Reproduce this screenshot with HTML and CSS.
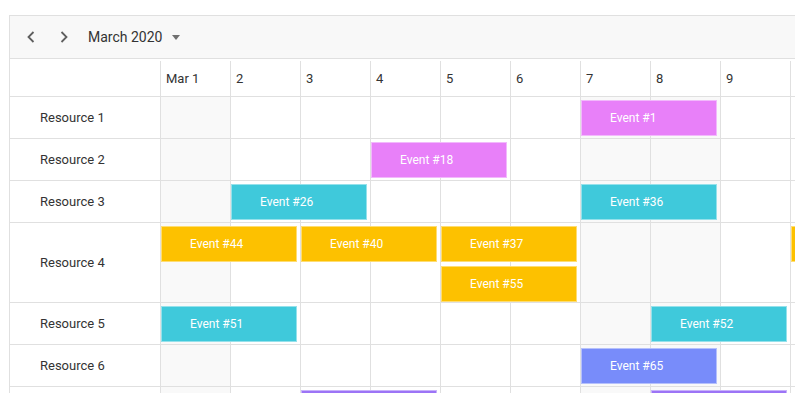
FILE: index.html
```html
<!DOCTYPE html>
<html>
  <head>
    <meta charset="UTF-8" />
    <title>Resource Timeline</title>
    <link rel="stylesheet" href="styles.css">
  </head>

  <body>
    <div class="scheduler">
      <div class="toolbar">
        <button class="nav-btn" aria-label="Previous">
          <svg width="10" height="12" viewBox="0 0 10 12"><polyline points="7.5,1 2.5,6 7.5,11" /></svg>
        </button>
        <button class="nav-btn" aria-label="Next">
          <svg width="10" height="12" viewBox="0 0 10 12"><polyline points="2.5,1 7.5,6 2.5,11" /></svg>
        </button>
        <div class="period">March 2020</div>
        <span class="caret"></span>
      </div>

      <div class="row head">
        <div class="res-cell"></div>
        <div class="day-head">Mar 1</div>
        <div class="day-head">2</div>
        <div class="day-head">3</div>
        <div class="day-head">4</div>
        <div class="day-head">5</div>
        <div class="day-head">6</div>
        <div class="day-head">7</div>
        <div class="day-head">8</div>
        <div class="day-head">9</div>
        <div class="day-head"></div>
        <div class="day-head"></div>
      </div>

      <!-- Resource 1 -->
      <div class="row">
        <div class="res-cell">Resource 1</div>
        <div class="cells">
          <div class="cell weekend"></div><div class="cell"></div><div class="cell"></div><div class="cell"></div><div class="cell"></div><div class="cell"></div><div class="cell weekend"></div><div class="cell weekend"></div><div class="cell"></div><div class="cell"></div><div class="cell"></div>
        </div>
        <div class="event pink d7">Event #1</div>
      </div>

      <!-- Resource 2 -->
      <div class="row">
        <div class="res-cell">Resource 2</div>
        <div class="cells">
          <div class="cell weekend"></div><div class="cell"></div><div class="cell"></div><div class="cell"></div><div class="cell"></div><div class="cell"></div><div class="cell weekend"></div><div class="cell weekend"></div><div class="cell"></div><div class="cell"></div><div class="cell"></div>
        </div>
        <div class="event pink d4">Event #18</div>
      </div>

      <!-- Resource 3 -->
      <div class="row">
        <div class="res-cell">Resource 3</div>
        <div class="cells">
          <div class="cell weekend"></div><div class="cell"></div><div class="cell"></div><div class="cell"></div><div class="cell"></div><div class="cell"></div><div class="cell weekend"></div><div class="cell weekend"></div><div class="cell"></div><div class="cell"></div><div class="cell"></div>
        </div>
        <div class="event cyan d2">Event #26</div>
        <div class="event cyan d7">Event #36</div>
      </div>

      <!-- Resource 4 -->
      <div class="row two-lanes">
        <div class="res-cell">Resource 4</div>
        <div class="cells">
          <div class="cell weekend"></div><div class="cell"></div><div class="cell"></div><div class="cell"></div><div class="cell"></div><div class="cell"></div><div class="cell weekend"></div><div class="cell weekend"></div><div class="cell"></div><div class="cell"></div><div class="cell"></div>
        </div>
        <div class="event amber d1">Event #44</div>
        <div class="event amber d3">Event #40</div>
        <div class="event amber d5">Event #37</div>
        <div class="event amber d10"></div>
        <div class="event amber d5 lane2">Event #55</div>
      </div>

      <!-- Resource 5 -->
      <div class="row">
        <div class="res-cell">Resource 5</div>
        <div class="cells">
          <div class="cell weekend"></div><div class="cell"></div><div class="cell"></div><div class="cell"></div><div class="cell"></div><div class="cell"></div><div class="cell weekend"></div><div class="cell weekend"></div><div class="cell"></div><div class="cell"></div><div class="cell"></div>
        </div>
        <div class="event cyan d1">Event #51</div>
        <div class="event cyan d8">Event #52</div>
      </div>

      <!-- Resource 6 -->
      <div class="row">
        <div class="res-cell">Resource 6</div>
        <div class="cells">
          <div class="cell weekend"></div><div class="cell"></div><div class="cell"></div><div class="cell"></div><div class="cell"></div><div class="cell"></div><div class="cell weekend"></div><div class="cell weekend"></div><div class="cell"></div><div class="cell"></div><div class="cell"></div>
        </div>
        <div class="event blue d7">Event #65</div>
      </div>

      <!-- Next resource, scrolled below the fold -->
      <div class="row">
        <div class="res-cell"></div>
        <div class="cells">
          <div class="cell weekend"></div><div class="cell"></div><div class="cell"></div><div class="cell"></div><div class="cell"></div><div class="cell"></div><div class="cell weekend"></div><div class="cell weekend"></div><div class="cell"></div><div class="cell"></div><div class="cell"></div>
        </div>
        <div class="event purple d3"></div>
        <div class="event purple d8"></div>
      </div>
    </div>
  </body>
</html>
```

FILE: styles.css
```css
body {
  margin: 0;
  font-family: Roboto, "Liberation Sans", sans-serif;
  color: #333;
  overflow: hidden;
}

.scheduler {
  margin: 15px 0 0 9px;
  width: 1000px;
  border: 1px solid #e0e0e0;
  border-right: none;
}

/* Toolbar */
.toolbar {
  display: flex;
  align-items: center;
  height: 42px;
  padding-left: 8px;
  background: #f8f8f8;
  border-bottom: 1px solid #e0e0e0;
}

.nav-btn {
  display: flex;
  align-items: center;
  justify-content: center;
  width: 26px;
  height: 26px;
  margin-right: 7px;
  padding: 0;
  border: none;
  background: none;
  cursor: pointer;
}

.nav-btn svg polyline {
  fill: none;
  stroke: #5f5f5f;
  stroke-width: 1.8;
}

.period {
  margin-left: 4px;
  font-size: 14px;
  color: #333;
}

.caret {
  margin-left: 10px;
  margin-top: 1px;
  border-left: 4.5px solid transparent;
  border-right: 4.5px solid transparent;
  border-top: 5px solid #707070;
}

/* Timeline grid */
.row {
  display: grid;
  grid-template-columns: 150px repeat(11, 70px);
  grid-template-rows: 41px;
  border-bottom: 1px solid #e0e0e0;
}

.row.head {
  grid-template-rows: 35px;
  margin-top: 2px;
}

.row.two-lanes {
  grid-template-rows: 40px 39px;
}

.res-cell {
  grid-column: 1;
  grid-row: 1 / -1;
  display: flex;
  align-items: center;
  padding-left: 30px;
  font-size: 13px;
}

.day-head {
  display: flex;
  align-items: center;
  padding-left: 5px;
  border-left: 1px solid #e0e0e0;
  font-size: 13px;
}

.cells {
  grid-column: 2 / -1;
  grid-row: 1 / -1;
  display: flex;
}

.cell {
  flex: 0 0 70px;
  box-sizing: border-box;
  border-left: 1px solid #e0e0e0;
}

.cell.weekend {
  background: #f9f9f9;
}

.event {
  grid-row: 1;
  align-self: start;
  display: flex;
  align-items: center;
  box-sizing: border-box;
  height: 36px;
  margin: 3px 3px 0 1px;
  padding-left: 28px;
  border: 1px solid rgba(255, 255, 255, 0.45);
  font-size: 12px;
  color: #fff;
  white-space: nowrap;
  overflow: hidden;
}

.event.lane2 {
  grid-row: 2;
}

.d1 { grid-column: 2 / span 2; }
.d2 { grid-column: 3 / span 2; }
.d3 { grid-column: 4 / span 2; }
.d4 { grid-column: 5 / span 2; }
.d5 { grid-column: 6 / span 2; }
.d7 { grid-column: 8 / span 2; }
.d8 { grid-column: 9 / span 2; }
.d10 { grid-column: 11 / span 2; }

.pink { background: #e880f9; }
.cyan { background: #3fc9db; }
.amber { background: #fdc100; }
.blue { background: #788cfa; }
.purple { background: #9c74f6; }
```
